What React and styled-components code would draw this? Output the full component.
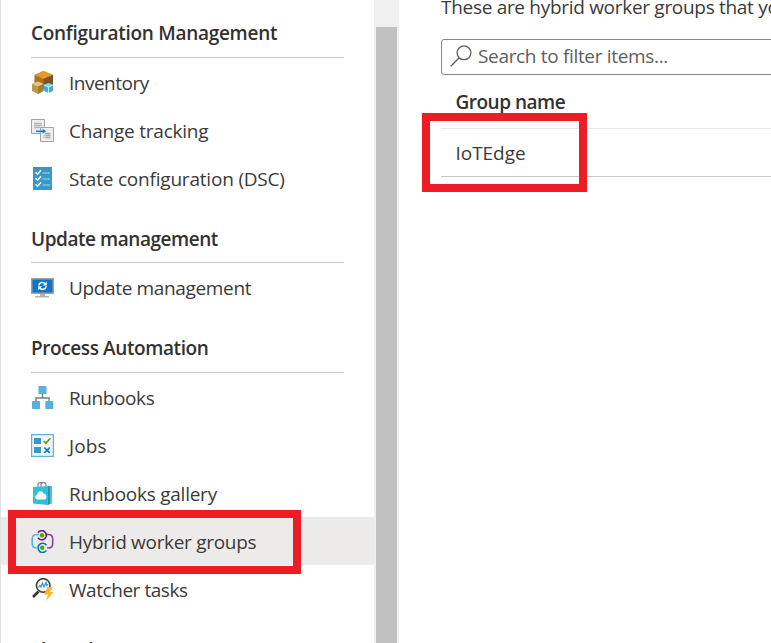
import React from "react";
import styled, { createGlobalStyle } from "styled-components";

const GlobalStyle = createGlobalStyle`
  * { box-sizing: border-box; }
  html, body { margin: 0; background: #fff; overflow: hidden; }
  body { font-family: "Open Sans", "Noto Sans", sans-serif; font-size: 19px; color: #3b3a39; }
`;

const Page = styled.div`
  position: relative;
  display: flex;
  width: 771px;
  height: 643px;
  overflow: hidden;
`;

const Sidebar = styled.nav`
  width: 374px;
  flex: none;
  border-left: 1px solid #e1e1e1;
  overflow: hidden;
`;

const SectionTitle = styled.h2`
  display: flex;
  align-items: flex-end;
  height: ${(p) => p.$height}px;
  margin: 0 30px;
  padding-bottom: ${(p) => p.$pad}px;
  border-bottom: 1px solid #c8c6c4;
  font-size: 19px;
  font-weight: 600;
  line-height: 26px;
  color: #323130;
  white-space: nowrap;
  letter-spacing: ${(p) => p.$spacing}px;
`;

const Item = styled.a`
  display: flex;
  align-items: center;
  height: 48px;
  padding: 1px 0 0 30px;
  gap: 15px;
  background: ${(p) => (p.$selected ? "#edebe9" : "transparent")};
  white-space: nowrap;
  svg { flex: none; width: 23px; height: 23px; }
`;

const Label = styled.span`
  line-height: 26px;
  letter-spacing: ${(p) => p.$spacing}px;
`;

const ScrollTrack = styled.div`
  width: 25px;
  flex: none;
  padding: 27px 2px 0;
  background: #f0f0f0;
`;

const ScrollThumb = styled.div`
  height: 100%;
  background: #c1c1c1;
`;

const Main = styled.main`
  flex: 1;
  min-width: 0;
  padding-left: 42px;
  overflow: hidden;
`;

const Intro = styled.p`
  display: flex;
  align-items: flex-end;
  height: 39px;
  margin: 0;
  padding-bottom: 19px;
  line-height: 26px;
  white-space: nowrap;
  letter-spacing: ${(p) => p.$spacing}px;
`;

const SearchBox = styled.div`
  display: flex;
  align-items: center;
  width: 400px;
  height: 36px;
  padding: 0 0 2px 8px;
  gap: 6px;
  border: 1px solid #8a8886;
  border-radius: 3px;
  color: #605e5c;
  white-space: nowrap;
  svg { flex: none; width: 22px; height: 22px; }
`;

const HeaderCell = styled.div`
  height: 54px;
  padding: 14px 0 0 14.5px;
  border-bottom: 1px solid #e8e6e4;
  line-height: 26px;
  font-weight: 600;
  color: #323130;
`;

const Cell = styled.div`
  height: 48px;
  padding: 11px 0 0 14.5px;
  border-bottom: 1px solid #c8c6c4;
  line-height: 26px;
`;

const Highlight = styled.div`
  position: absolute;
  left: ${(p) => p.$x}px;
  top: ${(p) => p.$y}px;
  width: ${(p) => p.$w}px;
  height: ${(p) => p.$h}px;
  border: 8px solid #ee1c24;
`;

const InventoryIcon = () => (
  <svg viewBox="0 0 23 23">
    <path d="M12.5 0 22 4v10l-9.500 4-9-4V4z" fill="#b06d1c" />
    <path d="M12.500 0 22 4l-9.500 4-9-4z" fill="#e8982c" />
    <path d="M12.500 8 22 4v10l-9.500 4z" fill="#7d5525" />
    <path d="M7 10.500 12.500 13v7L7 23l-6-3v-7z" fill="#b89a50" />
    <path d="M7 10.500 12.500 13 7 15.500 1 13z" fill="#dfc77f" />
    <path d="M7 15.500 12.500 13v7L7 23z" fill="#9c7f3c" />
    <path d="m17.500 12 4.500 2v6l-4.500 2-4.500-2v-6z" fill="#45a9dc" />
    <path d="m17.500 12 4.500 2-4.500 2-4.500-2z" fill="#8bd0f0" />
    <path d="m13 14 4.500 2 4.500-2M17.500 16v6" fill="none" stroke="#d9f2fc" strokeWidth=".9" />
  </svg>
);

const ChangeIcon = () => (
  <svg viewBox="0 0 23 23">
    <path d="M.5.5h13v14H.5z" fill="#efefef" stroke="#a3a3a3" />
    <path d="M3 4.500h8M3 6.500h8M3 8.500h6" stroke="#b9b9b9" strokeWidth="1.300" />
    <path d="M9.500 8.500h13v14h-13z" fill="#efefef" stroke="#a3a3a3" />
    <path d="M14 14.500h5.500M12.500 16.500h1m1 0h5m-7 2h1m1 0h5" stroke="#a9a9a9" strokeWidth="1.300" />
    <path d="M5 12.300h8" stroke="#1b7ad0" strokeWidth="1.500" />
    <path d="m11.500 9.800 3.800 2.500-3.800 2.500z" fill="#1b7ad0" />
  </svg>
);

const StateIcon = () => (
  <svg viewBox="0 0 23 23">
    <path d="M2 0h19v23H2z" fill="#3999c6" />
    <path d="m4.500 5.300 2 2 3.500-4M4.500 11.300l2 2 3.500-4M4.500 17.300l2 2 3.500-4" fill="none" stroke="#fff" strokeWidth="1.400" />
    <path d="M11.500 6H19M11.500 12H19M11.500 18H19" stroke="#a9d5ea" strokeWidth="1.200" />
  </svg>
);

const UpdateIcon = () => (
  <svg viewBox="0 0 23 23">
    <path d="M0 2h23v16H0z" fill="#a0a1a2" />
    <path d="M1.500 3.500h20v13h-20z" fill="#0f75ca" />
    <path d="M9 18h5v2h4v1.500H4V20h5z" fill="#b3b4b5" />
    <path d="M7.700 9.400c.7-3 4.600-4 6.600-1.600M15.300 10.400c-.7 3-4.600 4-6.600 1.600" fill="none" stroke="#fff" strokeWidth="1.600" />
    <path d="M15.800 5.500v4h-4zM7.200 14.300v-4h4z" fill="#fff" />
  </svg>
);

const RunbookIcon = () => (
  <svg viewBox="0 0 23 23">
    <path d="M11.500 7v5M5 16v-4h13v4" fill="none" stroke="#7a7a7a" strokeWidth="1.400" />
    <rect x="7.500" y="0" width="8" height="8" rx=".7" fill="#55b2dc" />
    <rect x="1" y="15" width="8" height="8" rx=".7" fill="#55b2dc" />
    <rect x="14.300" y="15" width="8" height="8" rx=".7" fill="#55b2dc" />
  </svg>
);

const JobsIcon = () => (
  <svg viewBox="0 0 23 23">
    <path d="M.6.600h21.800v21.800H.600z" fill="#f1f9fd" stroke="#59b4d9" strokeWidth="1.300" />
    <path d="M3 4h7v6H3zM3 13h7v6H3z" fill="#3999c6" />
    <path d="m12.700 7 2.200 2.200 4.400-5" fill="none" stroke="#57a300" strokeWidth="1.700" />
    <path d="m13.300 13.500 5.500 5.500m0-5.500L13.300 19" stroke="#0f70c4" strokeWidth="1.700" />
  </svg>
);

const GalleryIcon = () => (
  <svg viewBox="0 0 23 23">
    <path d="M7 5V2.500C7 1 8 .7 9 .7h3.500C14 .7 15 1.500 15 3v2M10 5V2.700C10 1.400 11 1 12 1" fill="none" stroke="#858585" strokeWidth="1.200" />
    <path d="M17 4h4v17l-4 2z" fill="#2692ad" />
    <path d="M18.800 4H21v17l-2.200 1z" fill="#45c5df" />
    <path d="M2 5l15-1v19L2 21.500z" fill="#32bedd" />
    <path d="M6.500 17.500c-3.200 0-3.200-4.200-.3-4.400C6 8.500 12 8 12.700 12c3.500-.4 3.700 5.500.3 5.500z" fill="#fff" />
  </svg>
);

const HybridIcon = () => (
  <svg viewBox="0 0 23 23">
    <path d="M8 4.500H6C3 4.500 1.200 6 1.200 9v4.500c0 3 1.500 4.500 4.500 4.500" fill="none" stroke="#59b4d9" strokeWidth="1.600" />
    <path d="M14.500 4.500h3c2.500 0 4.200 1.500 4.200 4.500v4.500c0 3-1.500 4.500-4.500 4.500H16" fill="none" stroke="#804998" strokeWidth="1.600" />
    <path d="M7 2.700A4.600 4.600 0 1 1 7 7.800" fill="none" stroke="#68217a" strokeWidth="1.600" />
    <path d="M15.500 15.300A4.600 4.600 0 1 0 15.500 20.400" fill="none" stroke="#0072c6" strokeWidth="1.600" />
    <circle cx="11" cy="5.200" r="2.200" fill="#57a300" />
    <circle cx="11.200" cy="17.800" r="2.200" fill="#57a300" />
  </svg>
);

const WatcherIcon = () => (
  <svg viewBox="0 0 23 23">
    <path d="M7.500 13.500 2 19" stroke="#333" strokeWidth="2.600" />
    <circle cx="12.200" cy="7.500" r="6.800" fill="#f4fbfe" stroke="#404040" strokeWidth="1.600" />
    <path d="m7.500 9.500 1.500-2 1 1.500 1.500-4 1.500 4L15 4.500l.8 3L17 6" fill="none" stroke="#3b95cf" strokeWidth="1.200" />
    <path d="M16.500 9h5.500l-3 5h3.500L15 23l2-6.500h-4z" fill="#fcb72a" />
  </svg>
);

const SearchIcon = () => (
  <svg viewBox="0 0 22 22" fill="none" stroke="#605e5c" strokeWidth="1.300">
    <circle cx="14" cy="7.800" r="6.900" />
    <path d="M9.200 12.800 .8 21.200" />
  </svg>
);

const sections = [
  {
    title: "Configuration Management", height: 58, pad: 11, spacing: -0.28,
    items: [
      ["Inventory", InventoryIcon, -0.5],
      ["Change tracking", ChangeIcon, -0.22],
      ["State configuration (DSC)", StateIcon, -0.2],
    ],
  },
  {
    title: "Update management", height: 61, pad: 10, spacing: -0.45,
    items: [["Update management", UpdateIcon, -0.35]],
  },
  {
    title: "Process Automation", height: 62, pad: 11, spacing: -0.4,
    items: [
      ["Runbooks", RunbookIcon, -0.4],
      ["Jobs", JobsIcon, 0.1],
      ["Runbooks gallery", GalleryIcon, -0.25],
      ["Hybrid worker groups", HybridIcon, -0.31],
      ["Watcher tasks", WatcherIcon, -0.45],
    ],
  },
  { title: "Shared Resources", height: 62, pad: 11, spacing: -0.4, items: [] },
];

export default function App() {
  return (
    <Page>
      <GlobalStyle />
      <Sidebar>
        {sections.map((s) => (
          <React.Fragment key={s.title}>
            <SectionTitle $height={s.height} $pad={s.pad} $spacing={s.spacing}>{s.title}</SectionTitle>
            {s.items.map(([name, Icon, spacing]) => (
              <Item key={name} $selected={name === "Hybrid worker groups"}>
                <Icon />
                <Label $spacing={spacing}>{name}</Label>
              </Item>
            ))}
          </React.Fragment>
        ))}
      </Sidebar>
      <ScrollTrack><ScrollThumb /></ScrollTrack>
      <Main>
        <Intro $spacing={-0.3}>These are hybrid worker groups that you can use</Intro>
        <SearchBox>
          <SearchIcon />
          <Label $spacing={-0.33}>Search to filter items...</Label>
        </SearchBox>
        <HeaderCell><Label $spacing={-0.5}>Group name</Label></HeaderCell>
        <Cell><Label $spacing={-0.05}>IoTEdge</Label></Cell>
      </Main>
      <Highlight $x={8} $y={510} $w={293} $h={64} />
      <Highlight $x={422} $y={113} $w={165} $h={79} />
    </Page>
  );
}
